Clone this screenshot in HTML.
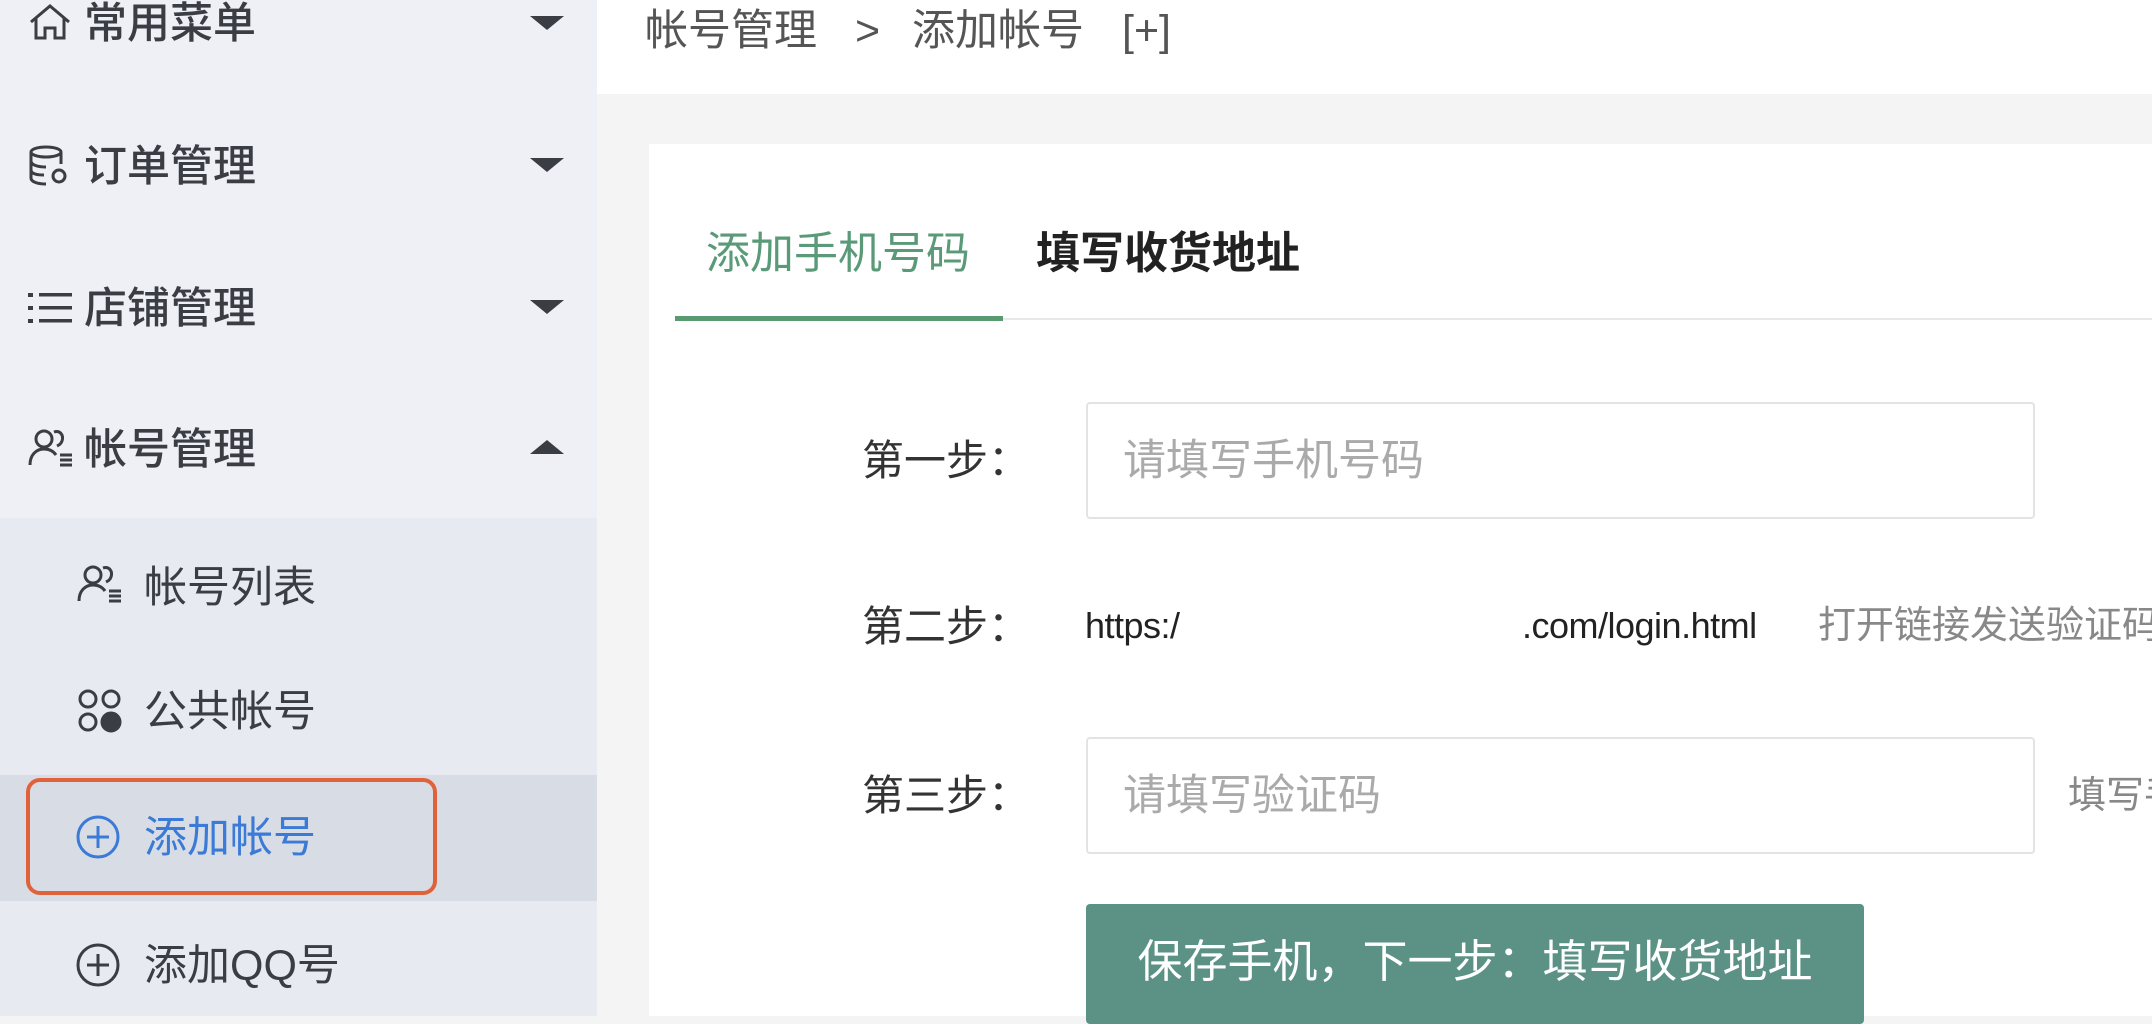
<!DOCTYPE html>
<html><head><meta charset="utf-8"><style>
*{margin:0;padding:0;box-sizing:border-box}
body{width:2152px;height:1016px;overflow:hidden;position:relative;background:#f4f4f5;font-family:"Liberation Sans","Noto Sans CJK SC",sans-serif}
.abs{position:absolute}
.side{left:0;top:0;width:597px;height:1016px;background:#eef0f5}
.sub{left:0;top:518px;width:597px;height:498px;background:#e7eaf0}
.act{left:0;top:775px;width:597px;height:126px;background:#d8dde5}
.mi{position:absolute;left:84px;font-size:43px;color:#3a3d44;line-height:1;font-weight:500}
.si{position:absolute;left:144px;font-size:43px;color:#3a3d44;line-height:1}
.arr{position:absolute;left:530px;width:0;height:0;border-left:17px solid transparent;border-right:17px solid transparent}
.dn{border-top:14px solid #3a3d44}
.up{border-bottom:14px solid #3a3d44}
.ic{position:absolute}
.bc{position:absolute;top:10px;font-size:43px;color:#555;line-height:1;white-space:nowrap}
</style></head><body>
<div class="abs side"></div>
<div class="abs sub"></div>
<div class="abs act"></div>
<div class="abs" style="left:26px;top:778px;width:411px;height:117px;border:4px solid #e0623a;border-radius:14px"></div>

<svg class="ic" style="left:28px;top:2px" width="44" height="40" viewBox="0 0 44 40" fill="none" stroke="#3a3d44" stroke-width="3"><path d="M3 20 L22 4 L41 20 M8 16 V36 H17 V26 H27 V36 H36 V16"/></svg>
<div class="mi" style="top:3px">常用菜单</div>
<div class="arr dn" style="top:16px"></div>

<svg class="ic" style="left:28px;top:144px" width="44" height="44" viewBox="0 0 44 44" fill="none" stroke="#3a3d44" stroke-width="3"><ellipse cx="18" cy="8" rx="15" ry="5"/><path d="M3 8 V34 C3 38 10 40 18 40 M3 17 C3 21 10 23 18 23 M3 26 C3 30 10 31 16 31 M33 8 V20"/><circle cx="31" cy="32" r="6"/></svg>
<div class="mi" style="top:146px">订单管理</div>
<div class="arr dn" style="top:158px"></div>

<svg class="ic" style="left:28px;top:290px" width="46" height="36" viewBox="0 0 46 36" fill="#3a3d44"><rect x="0" y="3" width="5" height="4"/><rect x="0" y="16" width="5" height="4"/><rect x="0" y="29" width="5" height="4"/><rect x="11" y="3" width="33" height="3.5"/><rect x="11" y="16" width="33" height="3.5"/><rect x="11" y="29" width="33" height="3.5"/></svg>
<div class="mi" style="top:288px">店铺管理</div>
<div class="arr dn" style="top:300px"></div>

<svg class="ic" style="left:28px;top:427px" width="46" height="42" viewBox="0 0 46 42" fill="none" stroke="#3a3d44" stroke-width="3"><circle cx="16" cy="12" r="8"/><path d="M2 38 C2 28 8 22 16 22 C22 22 26 25 28 28"/><path d="M26 5 C32 3 36 8 34 14 C33 17 31 18 29 19"/><path d="M32 28 H44 M32 33 H44 M32 38 H44"/></svg>
<div class="mi" style="top:429px">帐号管理</div>
<div class="arr up" style="top:440px"></div>

<svg class="ic" style="left:77px;top:563px" width="46" height="42" viewBox="0 0 46 42" fill="none" stroke="#3a3d44" stroke-width="3"><circle cx="16" cy="12" r="8"/><path d="M2 38 C2 28 8 22 16 22 C22 22 26 25 28 28"/><path d="M26 5 C32 3 36 8 34 14 C33 17 31 18 29 19"/><path d="M32 28 H44 M32 33 H44 M32 38 H44"/></svg>
<div class="si" style="top:567px">帐号列表</div>

<svg class="ic" style="left:77px;top:688px" width="46" height="46" viewBox="0 0 46 46" fill="none" stroke="#3a3d44" stroke-width="3"><circle cx="11" cy="11" r="8"/><circle cx="34" cy="11" r="8"/><circle cx="11" cy="34" r="8"/><circle cx="34" cy="34" r="9" fill="#3a3d44"/></svg>
<div class="si" style="top:691px">公共帐号</div>

<svg class="ic" style="left:75px;top:814px" width="46" height="46" viewBox="0 0 46 46" fill="none" stroke="#3b7ad6" stroke-width="3"><circle cx="23" cy="23" r="20"/><path d="M23 12 V34 M12 23 H34"/></svg>
<div class="si" style="top:817px;color:#3b7ad6">添加帐号</div>

<svg class="ic" style="left:75px;top:942px" width="46" height="46" viewBox="0 0 46 46" fill="none" stroke="#3a3d44" stroke-width="3"><circle cx="23" cy="23" r="20"/><path d="M23 12 V34 M12 23 H34"/></svg>
<div class="si" style="top:945px">添加QQ号</div>

<div class="abs" style="left:597px;top:0;width:1555px;height:94px;background:#fff"></div>
<div class="bc" style="left:645px">帐号管理</div>
<div class="bc" style="left:855px">&gt;</div>
<div class="bc" style="left:912px">添加帐号</div>
<div class="bc" style="left:1122px">[+]</div>

<div class="abs" style="left:649px;top:144px;width:1503px;height:872px;background:#fff"></div>
<div class="abs" style="left:706px;top:232px;font-size:44px;color:#5a9a78;line-height:1">添加手机号码</div>
<div class="abs" style="left:1036px;top:232px;font-size:44px;color:#222;line-height:1;font-weight:bold">填写收货地址</div>
<div class="abs" style="left:675px;top:318px;width:1477px;height:2px;background:#e8e8e8"></div>
<div class="abs" style="left:675px;top:316px;width:328px;height:5px;background:#5a9a70"></div>

<div class="abs" style="left:862px;top:440px;font-size:42px;color:#333;line-height:1">第一步：</div>
<div class="abs" style="left:1086px;top:402px;width:949px;height:117px;border:2px solid #e3e3e3;border-radius:4px"></div>
<div class="abs" style="left:1123px;top:440px;font-size:43px;color:#aaa;line-height:1">请填写手机号码</div>

<div class="abs" style="left:862px;top:606px;font-size:42px;color:#333;line-height:1">第二步：</div>
<div class="abs" style="left:1085px;top:608px;font-size:36px;color:#222;line-height:1;letter-spacing:-0.5px">https:/</div>
<div class="abs" style="left:1522px;top:608px;font-size:36px;color:#222;line-height:1;letter-spacing:-0.5px">.com/login.html</div>
<div class="abs" style="left:1818px;top:607px;font-size:38px;color:#888;line-height:1;white-space:nowrap">打开链接发送验证码</div>

<div class="abs" style="left:862px;top:775px;font-size:42px;color:#333;line-height:1">第三步：</div>
<div class="abs" style="left:1086px;top:737px;width:949px;height:117px;border:2px solid #e3e3e3;border-radius:4px"></div>
<div class="abs" style="left:1123px;top:775px;font-size:43px;color:#aaa;line-height:1">请填写验证码</div>
<div class="abs" style="left:2068px;top:777px;font-size:38px;color:#888;line-height:1;white-space:nowrap">填写手机</div>

<div class="abs" style="left:1086px;top:904px;width:778px;height:120px;background:#5b9285;border-radius:4px"></div>
<div class="abs" style="left:1086px;top:939px;width:778px;text-align:center;font-size:45px;color:#fff;line-height:1">保存手机，下一步：填写收货地址</div>
</body></html>
